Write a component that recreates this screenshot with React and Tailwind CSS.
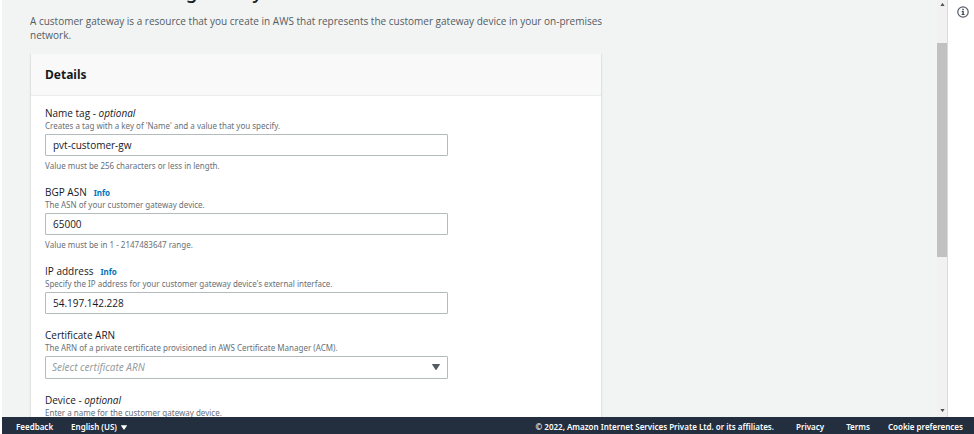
import React, { useState } from 'react';

const Caret = ({ className }) => (
  <svg className={className} viewBox="0 0 8 6" fill="currentColor" aria-hidden="true">
    <path d="M0.4 0h7.2c.3 0 .5.3.3.6L4.5 5.7c-.2.4-.8.4-1 0L.1.6C-.1.3.1 0 .4 0z" />
  </svg>
);

const InfoIcon = () => (
  <svg className="h-3 w-3" viewBox="0 0 12 12" fill="none" aria-hidden="true">
    <circle cx="6" cy="6" r="5.2" stroke="#545b64" strokeWidth="1.2" />
    <path d="M5.3 2.8h1.5v1.4H5.3z" fill="#414750" />
    <path d="M4.7 5h2.1v3.1h.7v1H4.6v-1h.8V6h-.7z" fill="#414750" />
  </svg>
);

const Field = ({ id, label, optional, info, description, constraint, children }) => (
  <div className="mb-[15px]">
    <div className="flex items-baseline gap-[7px] leading-[13px]">
      <label htmlFor={id} className="font-['Open_Sans',sans-serif] text-[10px]">
        {label}
        {optional && <> - <i>optional</i></>}
      </label>
      {info && (
        <a href="#info" className="text-[8px] font-bold text-[#0073bb]">Info</a>
      )}
    </div>
    <p className="mb-[3px] text-[8px] leading-[11px] text-[#687078]">{description}</p>
    {children}
    {constraint && (
      <p className="mt-1 text-[8px] leading-[11px] text-[#687078]">{constraint}</p>
    )}
  </div>
);

const TextInput = ({ id, value, onChange }) => (
  <input
    id={id}
    type="text"
    value={value}
    onChange={(e) => onChange(e.target.value)}
    className="block h-[22px] w-full rounded-[1px] border border-[#b4bbbc] bg-white px-[7px] font-['Open_Sans',sans-serif] text-[10px] text-[#16191f] outline-none focus:border-[#00a1c9]"
  />
);

const Scrollbar = () => (
  <div className="flex w-[11px] shrink-0 flex-col items-center border-r border-[#d9dbdb] bg-[#f1f1f1] text-[#505050]">
    <Caret className="mt-[3px] h-[3px] w-[5px] rotate-180" />
    <div className="mt-[37px] h-[214px] w-full bg-[#c1c1c1]" />
    <Caret className="mt-auto mb-[5px] h-[3px] w-[5px]" />
  </div>
);

const Footer = () => (
  <footer className="flex h-[17px] shrink-0 items-center bg-[#232f3e] pt-[3px] pr-[11px] pl-3.5 text-[8px] font-semibold text-white">
    <a href="#feedback">Feedback</a>
    <button type="button" className="ml-[18px] flex items-center gap-1">
      English (US)
      <Caret className="h-[5px] w-[6px]" />
    </button>
    <span className="ml-auto">© 2022, Amazon Internet Services Private Ltd. or its affiliates.</span>
    <a href="#privacy" className="ml-[22px]">Privacy</a>
    <a href="#terms" className="ml-[22px]">Terms</a>
    <a href="#cookies" className="ml-[18px]">Cookie preferences</a>
  </footer>
);

const App = () => {
  const [name, setName] = useState('pvt-customer-gw');
  const [asn, setAsn] = useState('65000');
  const [ip, setIp] = useState('54.197.142.228');
  const [device, setDevice] = useState('');
  const [certificate, setCertificate] = useState('');

  return (
    <div className="flex h-screen flex-col overflow-hidden bg-white pl-0.5 font-['Noto_Sans',sans-serif] text-[#16191f]">
      <div className="flex min-h-0 flex-1">
        <main className="min-w-0 flex-1 overflow-hidden bg-[#f2f4f3] pl-7">
          <h1 className="-mt-[21px] text-[19px] leading-6 font-medium">Create customer gateway</h1>
          <p className="mt-[11px] mb-3 max-w-[590px] font-['Open_Sans',sans-serif] text-[10px] leading-3.5 text-[#545b64]">
            A customer gateway is a resource that you create in AWS that represents the customer gateway device in your on-premises network.
          </p>
          <section className="w-full max-w-[572px] border-x border-[#dfe2e2] bg-white shadow-xs">
            <div className="border-b border-[#eaeded] bg-[#faf9fa] px-3.5 py-3">
              <h2 className="text-[12px] leading-[17px] font-bold">Details</h2>
            </div>
            <form className="px-3.5 py-[11px]">
              <div className="w-full max-w-[403px]">
                <Field
                  id="name-tag"
                  label="Name tag"
                  optional
                  description="Creates a tag with a key of 'Name' and a value that you specify."
                  constraint="Value must be 256 characters or less in length."
                >
                  <TextInput id="name-tag" value={name} onChange={setName} />
                </Field>
                <Field
                  id="bgp-asn"
                  label="BGP ASN"
                  info
                  description="The ASN of your customer gateway device."
                  constraint="Value must be in 1 - 2147483647 range."
                >
                  <TextInput id="bgp-asn" value={asn} onChange={setAsn} />
                </Field>
                <Field
                  id="ip-address"
                  label="IP address"
                  info
                  description="Specify the IP address for your customer gateway device's external interface."
                >
                  <TextInput id="ip-address" value={ip} onChange={setIp} />
                </Field>
                <Field
                  id="certificate-arn"
                  label="Certificate ARN"
                  description="The ARN of a private certificate provisioned in AWS Certificate Manager (ACM)."
                >
                  <div className="relative">
                    <select
                      id="certificate-arn"
                      value={certificate}
                      onChange={(e) => setCertificate(e.target.value)}
                      className="block h-[23px] w-full appearance-none rounded-[1px] border border-[#b4bbbc] bg-white px-1.5 text-[10px] text-[#95a0a1] italic outline-none focus:border-[#00a1c9]"
                    >
                      <option value="">Select certificate ARN</option>
                    </select>
                    <Caret className="pointer-events-none absolute top-2 right-2 h-1.5 w-2 text-[#545b64]" />
                  </div>
                </Field>
                <Field
                  id="device"
                  label="Device"
                  optional
                  description="Enter a name for the customer gateway device."
                >
                  <TextInput id="device" value={device} onChange={setDevice} />
                </Field>
              </div>
            </form>
          </section>
        </main>
        <Scrollbar />
        <aside className="w-[26px] shrink-0 bg-white pt-1.5 pl-[9px]">
          <button type="button" aria-label="Info" className="block">
            <InfoIcon />
          </button>
        </aside>
      </div>
      <Footer />
    </div>
  );
};

export default App;
